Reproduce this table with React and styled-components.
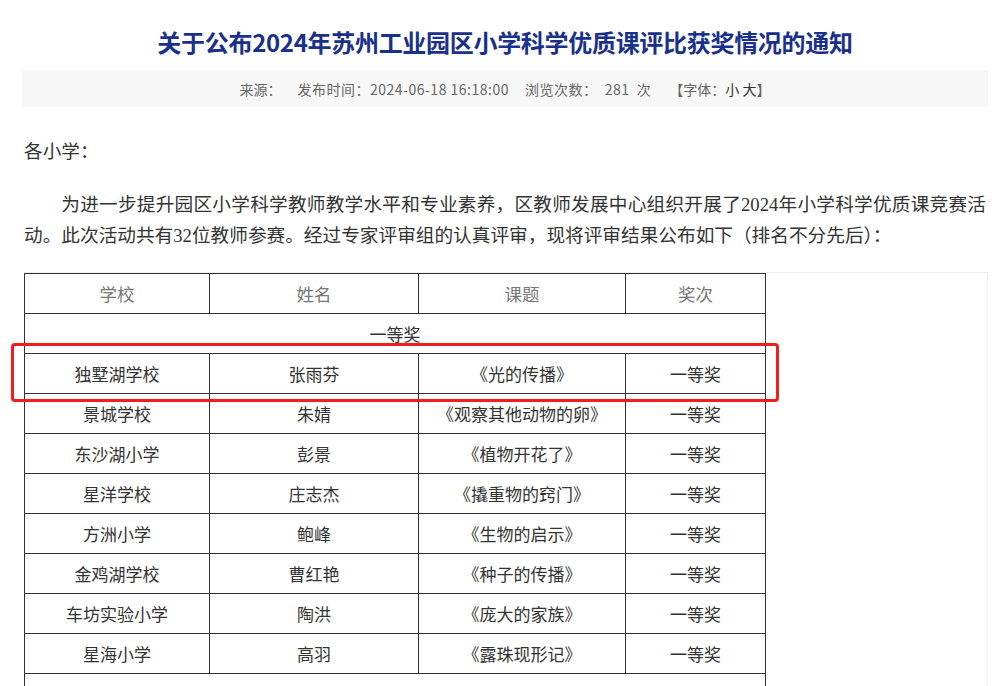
import React from 'react'
import styled, { createGlobalStyle } from 'styled-components'

const Global = createGlobalStyle`
  html, body {
    margin: 0;
    padding: 0;
    background: #fff;
  }
  body {
    font-family: "Noto Sans CJK SC", "Liberation Sans", sans-serif;
    color: #333;
  }
`;

const Page = styled.div`
  position: relative;
  width: 966px;
  padding: 0 12px 0 22px;
  overflow: hidden;
  height: 686px;
`;

const Title = styled.h1`
  margin: 26px 0 0;
  font-size: 24px;
  line-height: 32px;
  font-weight: 700;
  text-align: center;
  color: #1a318c;
  font-family: "Noto Sans CJK SC", "Liberation Sans", sans-serif;
  letter-spacing: -0.3px;
`;

const Meta = styled.div`
  margin-top: 12px;
  height: 37px;
  background: #f7f7f7;
  display: flex;
  justify-content: center;
  align-items: center;
  font-size: 14px;
  color: #666;
`;

const MetaItem = styled.span`
  margin-right: ${p => (p.gap === undefined ? 16 : p.gap)}px;
  letter-spacing: ${p => (p.wide ? '0.5px' : '0')};
  white-space: pre;
`;

const Strong = styled.span`
  color: #333;
  font-weight: 400;
`;

const Para = styled.p`
  margin: ${p => p.top}px 2px 0;
  font-family: "Liberation Serif", "Noto Sans CJK SC", serif;
  font-size: 18.67px;
  line-height: 31px;
  color: #333;
  text-align: justify;
  text-indent: ${p => (p.indent ? '2em' : '0')};
`;

const TableBox = styled.div`
  margin: 21px 0 0 2px;
  border: 1px solid #f1f1f1;
  border-left: none;
`;

const Table = styled.table`
  border-collapse: collapse;
  width: 741px;
  table-layout: fixed;
  font-size: 17px;
`;

const Cell = styled.td`
  border: 1px solid #333;
  height: 39px;
  padding: 0;
  text-align: center;
  vertical-align: middle;
  color: ${p => (p.head ? '#777' : '#333')};
  font-size: ${p => (p.head ? '17.5px' : '17px')};
  font-family: ${p =>
    p.head
      ? '"Liberation Serif", "Noto Sans CJK SC", serif'
      : '"Noto Sans CJK SC", "Liberation Sans", sans-serif'};
`;

const Highlight = styled.div`
  position: absolute;
  left: 11px;
  top: 343px;
  width: 762px;
  height: 53px;
  border: 3px solid #f41c1c;
  border-radius: 4px;
  pointer-events: none;
`;

const rows = [
  ['独墅湖学校', '张雨芬', '《光的传播》'],
  ['景城学校', '朱婧', '《观察其他动物的卵》'],
  ['东沙湖小学', '彭景', '《植物开花了》'],
  ['星洋学校', '庄志杰', '《撬重物的窍门》'],
  ['方洲小学', '鲍峰', '《生物的启示》'],
  ['金鸡湖学校', '曹红艳', '《种子的传播》'],
  ['车坊实验小学', '陶洪', '《庞大的家族》'],
  ['星海小学', '高羽', '《露珠现形记》'],
]

export default function App() {
  return (
    <Page>
      <Global />
      <Title>关于公布2024年苏州工业园区小学科学优质课评比获奖情况的通知</Title>
      <Meta>
        <MetaItem>来源：</MetaItem>
        <MetaItem wide>发布时间：2024-06-18 16:18:00</MetaItem>
        <MetaItem gap={18} wide>浏览次数：  281  次</MetaItem>
        <MetaItem gap={0}>【字体：<Strong>小 大</Strong>】</MetaItem>
      </Meta>
      <Para top={29}>各小学：</Para>
      <Para top={22} indent>
        为进一步提升园区小学科学教师教学水平和专业素养，区教师发展中心组织开展了2024年小学科学优质课竞赛活动。此次活动共有32位教师参赛。经过专家评审组的认真评审，现将评审结果公布如下（排名不分先后）：
      </Para>
      <TableBox>
        <Table>
          <colgroup>
            <col style={{ width: 185 }} />
            <col style={{ width: 209 }} />
            <col style={{ width: 207 }} />
            <col style={{ width: 140 }} />
          </colgroup>
          <tbody>
            <tr>
              <Cell head>学校</Cell>
              <Cell head>姓名</Cell>
              <Cell head>课题</Cell>
              <Cell head>奖次</Cell>
            </tr>
            <tr>
              <Cell colSpan={4}>一等奖</Cell>
            </tr>
            {rows.map(r => (
              <tr key={r[0]}>
                <Cell>{r[0]}</Cell>
                <Cell>{r[1]}</Cell>
                <Cell>{r[2]}</Cell>
                <Cell>一等奖</Cell>
              </tr>
            ))}
            <tr>
              <Cell colSpan={4}></Cell>
            </tr>
          </tbody>
        </Table>
      </TableBox>
      <Highlight />
    </Page>
  )
}
